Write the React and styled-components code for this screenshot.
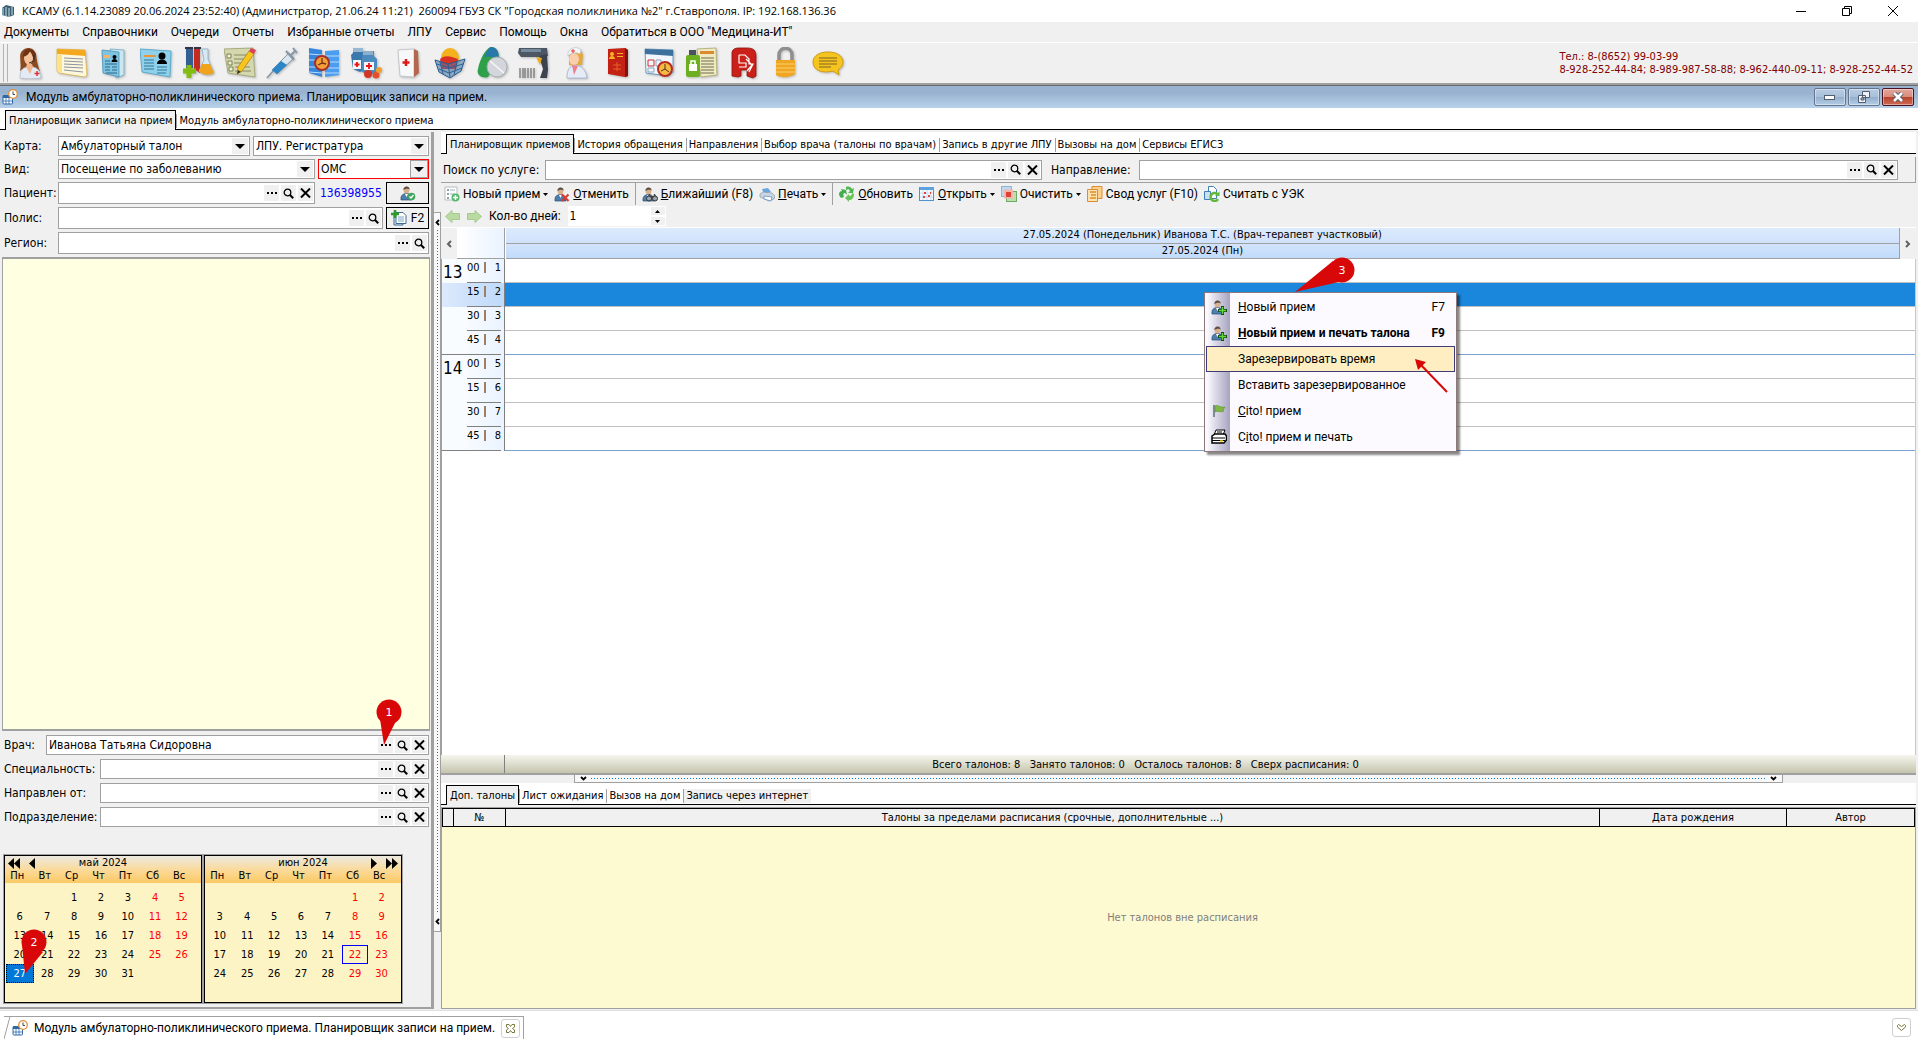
import React, { useState } from "react";
import styled, { createGlobalStyle, css } from "styled-components";

const tahoma = `"DejaVu Sans Condensed", "Noto Sans", sans-serif`;
const segoe = `Roboto, "Open Sans", sans-serif`;

const GlobalStyle = createGlobalStyle`
  * {
    box-sizing: border-box;
  }
  body {
    margin: 0;
    background: #ffffff;
    color: #000000;
    font: 12px/16px ${segoe};
  }
  button, input, select {
    margin: 0;
    padding: 0;
    border: 0;
    border-radius: 0;
    background: none;
    color: inherit;
    font: inherit;
  }
  table {
    border-collapse: separate;
    border-spacing: 0;
  }
  th, td {
    padding: 0;
    font-weight: normal;
  }
  svg {
    display: block;
    flex: none;
  }
`;

// Window frame
const Window = styled.div`
  display: flex;
  flex-direction: column;
  height: 100vh;
  overflow: hidden;
`;
const TitleBar = styled.header`
  display: flex;
  align-items: center;
  height: 22px;
  padding: 0 2px 0 1px;
  white-space: pre;
`;
const TitleText = styled.h1`
  flex: 1;
  margin: 0 0 0 7px;
  font: 11px/16px "Open Sans", sans-serif;
`;
const WindowButton = styled.button`
  display: flex;
  justify-content: center;
  width: 46px;
`;
const MenuBar = styled.nav`
  display: flex;
  gap: 13px;
  height: 20px;
  padding: 1px 4px;
  background: #f0f0f0;
`;
const MenuItem = styled.button`
  white-space: nowrap;
`;
const MainToolbar = styled.div`
  display: flex;
  align-items: center;
  gap: 2px;
  height: 43px;
  padding: 0 5px 0 3px;
  border-top: 1px solid #ffffff;
  border-bottom: 2px solid #a0a0a0;
  background: #f0f0f0;
`;
const Grip = styled.div`
  width: 5px;
  height: 38px;
  border: solid #b4b4b4;
  border-width: 0 1px;
`;
const MainIcons = styled.div`
  display: flex;
  gap: 6px;
  flex: 1;
  padding-left: 2px;
`;
const MainIconButton = styled.button`
  width: 36px;
  display: flex;
  justify-content: center;
  filter: drop-shadow(1px 1px 1px #8888);
`;
const Phones = styled.address`
  color: #800000;
  font: 11px/13px ${tahoma};
  white-space: nowrap;
`;

// Child window
const ChildTitle = styled.div`
  display: flex;
  align-items: center;
  height: 23px;
  padding: 0 4px 0 2px;
  gap: 8px;
  border-top: 1px solid #696969;
  background: linear-gradient(#99b4d1, #98b2cf 30%, #b9d1ea);
`;
const ChildTitleText = styled.h2`
  flex: 1;
  margin: 0;
  font: inherit;
`;
const CaptionGroup = styled.div`
  display: flex;
  gap: 2px;
`;
const CaptionButton = styled.button`
  display: flex;
  align-items: center;
  justify-content: center;
  width: 32px;
  height: 18px;
  border: 1px solid ${(props) => (props.$close ? "#4a1424" : "#65758f")};
  border-radius: 2px;
  box-shadow: inset 0 0 0 1px #ffffff66;
  background: ${(props) =>
    props.$close
      ? "linear-gradient(#e3a69b, #d88c7e 48%, #b8402a 50%, #cf6b54)"
      : "linear-gradient(#b8cde4, #a8c0da 48%, #93aecb 50%, #b4cde6)"};
`;

const Tabs = styled.div`
  display: flex;
  align-items: flex-end;
  flex: none;
  height: 22px;
  padding-left: 5px;
  border-bottom: 1px solid #000000;
  background: #ffffff;
  font: 11px/14px ${tahoma};
`;
const Tab = styled.button`
  position: relative;
  height: 14px;
  margin-bottom: 1px;
  padding: 0 3px 0 2px;
  white-space: nowrap;
  background: ${(props) => (props.$shaded ? "#f0f0f0" : "none")};
  & + & {
    border-left: 1px solid #a0a0a0;
  }
  ${(props) =>
    props.$active &&
    css`
      height: 20px;
      margin-bottom: -1px;
      padding: 0 3px;
      border: 1px solid #000000;
      border-bottom: 0;
      background: #f0f0f0;
      & + ${Tab} {
        border-left: 0;
      }
    `}
`;

const Workspace = styled.main`
  display: flex;
  flex: 1;
  min-height: 0;
  padding: 2px 2px 1px 0;
  background: #f0f0f0;
`;

// Left column
const Sidebar = styled.section`
  display: flex;
  flex-direction: column;
  flex: none;
  width: 434px;
  padding-left: 2px;
  border-right: 3px solid #a0a0a0;
  border-bottom: 2px solid #a0a0a0;
`;
const Form = styled.div`
  display: flex;
  flex-direction: column;
  gap: ${(props) => props.$gap}px;
  padding: 4px 2px 3px 1px;
  font: 12px/16px ${tahoma};
`;
const FormRow = styled.div`
  display: flex;
  align-items: center;
  gap: 3px;
`;
const FormLabel = styled.label`
  flex: none;
  width: ${(props) => props.$width}px;
  padding-left: 1px;
  margin-right: -3px;
  white-space: nowrap;
`;
const FieldBox = styled.div`
  display: flex;
  align-items: center;
  gap: 2px;
  flex: ${(props) => (props.$width ? "none" : "1")};
  width: ${(props) => (props.$width ? `${props.$width}px` : "auto")};
  height: ${(props) => props.$height || 20}px;
  padding: 0 1px 0 2px;
  border: 1px solid ${(props) => (props.$alert ? "#ff0000" : "#a0a0a0")};
  background: #ffffff;
`;
const TextInput = styled.input`
  flex: 1;
  min-width: 0;
  outline: 0;
`;
const FieldButton = styled.button`
  display: flex;
  align-items: center;
  justify-content: center;
  position: relative;
  width: 15px;
  height: 16px;
  background: #f0f0f0;
`;
const SelectBox = styled(FieldBox)`
  display: grid;
  grid-template-columns: 1fr 16px;
  gap: 0;
`;
const Select = styled.select`
  grid-area: 1 / 1 / 2 / 3;
  appearance: none;
  outline: 0;
`;
const SelectArrow = styled.span`
  grid-area: 1 / 2;
  display: flex;
  align-items: center;
  justify-content: center;
  height: 16px;
  background: #f0f0f0;
  pointer-events: none;
  outline: ${(props) => (props.$framed ? "1px solid #a0a0a0" : "0")};
`;
const PatientNumber = styled.output`
  width: 66px;
  padding-left: 2px;
  color: #0000ff;
`;
const FrameButton = styled.button`
  display: flex;
  align-items: center;
  justify-content: center;
  gap: 4px;
  width: 43px;
  height: 22px;
  border: 1px solid #000000;
  font-family: ${segoe};
`;
const PatientInfo = styled.div`
  flex: 1;
  min-height: 0;
  margin-right: 1px;
  border: 1px solid #a0a0a0;
  border-top-width: 2px;
  border-bottom-width: 2px;
  background: #ffffe1;
`;

// Calendar
const Calendars = styled.div`
  display: flex;
  gap: 2px;
  width: 400px;
  margin: 24px 0 3px 1px;
  padding: 1px;
  background: #a0a0a0;
`;
const Month = styled.table`
  flex: 1;
  height: 148px;
  padding-right: 7px;
  border: 1px solid #000000;
  background: linear-gradient(#ece9e0, #fbd995 55%, #fbc965) 0 0 / 100% 27px no-repeat
    #fdf4c6;
  font: 11px/12px ${tahoma};
  text-align: center;
  table-layout: fixed;
`;
const MonthBody = styled.tbody`
  &::before {
    content: "";
    display: table-row;
    height: 4px;
  }
`;
const MonthCaption = styled.th`
  height: 14px;
`;
const CaptionLine = styled.div`
  display: grid;
  grid-template-columns: 36px 1fr 36px;
  align-items: center;
  margin-right: -7px;
`;
const MonthNav = styled.span`
  display: flex;
  justify-content: ${(props) => (props.$end ? "flex-end" : "flex-start")};
  gap: 8px;
  padding: 0 3px;
`;
const Weekday = styled.th`
  height: 14px;
  padding: 0 4px 2px 0;
  line-height: 10px;
`;
const Day = styled.td`
  height: 19px;
  padding: 0 0 0 1px;
  color: ${(props) => (props.$weekend ? "#ff0000" : "#000000")};
`;
const DayMark = styled.span`
  display: block;
  position: relative;
  height: 19px;
  line-height: 19px;
  ${(props) =>
    props.$selected &&
    css`
      outline: 1px dotted #000000;
      outline-offset: -1px;
      background: #0078d7;
      color: #ffffff;
    `}
  ${(props) =>
    props.$today &&
    css`
      border: 1px solid #0000ff;
      line-height: 17px;
    `}
`;

// Splitters
const VerticalSplitter = styled.div`
  display: flex;
  flex-direction: column;
  align-items: center;
  justify-content: space-between;
  flex: none;
  width: 7px;
  margin: 80px 0 77px;
  padding: 6px 0;
  border: 1px solid #a0a0a0;
  border-left: 0;
  background: #f8f8f8;
`;
const SplitterDots = styled.span`
  flex: 1;
  margin: ${(props) => (props.$vertical ? "4px 0" : "0 4px")};
  ${(props) =>
    props.$vertical
      ? "width: 1px; background: repeating-linear-gradient(#0078d7 0 1px, #f8f8f8 1px 3px);"
      : "height: 1px; background: repeating-linear-gradient(90deg, #0078d7 0 1px, #f8f8f8 1px 3px);"}
`;
const HorizontalSplitter = styled.div`
  display: flex;
  align-items: center;
  width: 82%;
  height: 8px;
  margin: 0 auto;
  padding: 0 5px;
  border: 1px solid #a0a0a0;
  border-top: 0;
  background: #f8f8f8;
`;

// Right column
const Content = styled.section`
  display: flex;
  flex-direction: column;
  flex: 1;
  min-width: 0;
`;
const SearchRow = styled.div`
  display: flex;
  align-items: center;
  height: 26px;
  margin-top: 3px;
  padding: 0 17px 0 2px;
  border: 1px solid #a0a0a0;
  border-width: 0 1px 1px 0;
  font: 12px/16px ${tahoma};
`;
const SearchLabel = styled.label`
  flex: none;
  width: ${(props) => props.$width}px;
  padding-left: ${(props) => props.$indent || 0}px;
`;
const ActionBar = styled.div`
  display: flex;
  align-items: center;
  height: 22px;
  padding-left: 3px;
`;
const ActionButton = styled.button`
  display: flex;
  align-items: center;
  gap: 3px;
  margin-right: 6px;
  white-space: nowrap;
`;
const Divider = styled.span`
  width: 1px;
  height: 22px;
  margin-right: 6px;
  background: #a0a0a0;
`;
const DaysRow = styled.div`
  display: flex;
  align-items: center;
  gap: 7px;
  height: 22px;
  padding-left: 4px;
`;
const Spinner = styled.span`
  display: flex;
  height: 20px;
  width: 98px;
  padding-left: 2px;
  background: #ffffff;
  font: 12px/20px ${tahoma};
`;
const SpinnerButtons = styled.span`
  display: flex;
  flex-direction: column;
  gap: 2px;
  padding: 1px;
`;
const SpinnerButton = styled.button`
  display: flex;
  align-items: center;
  justify-content: center;
  width: 14px;
  height: 8px;
  background: #f0f0f0;
`;
const ScheduleHead = styled.div`
  display: flex;
  height: 32px;
  border-top: 1px solid #ffffff;
`;
const ScrollButton = styled.button`
  display: flex;
  align-items: center;
  justify-content: center;
  width: 16px;
`;
const Corner = styled.div`
  width: 48px;
  border-right: 1px solid #a0a0a0;
  border-bottom: 1px solid #a0a0a0;
  background: linear-gradient(90deg, #ffffff, #eaf3ff);
`;
const HeadColumn = styled.div`
  flex: 1;
  display: grid;
  grid-template-rows: 1fr 1fr;
  border-right: 1px solid #a0a0a0;
  font: 11px/14px ${tahoma};
  text-align: center;
`;
const HeadCell = styled.div`
  border: solid #ffffff;
  border-width: 0 0 0 1px;
  box-shadow: inset 0 -1px #a0a0a0;
  background: ${(props) =>
    props.$day
      ? "linear-gradient(#d2e4fb, #bfdafb)"
      : "linear-gradient(#dceafc, #cfe2fc)"};
`;
const ScheduleArea = styled.div`
  position: relative;
  flex: 1;
  min-height: 0;
  border-left: 1px solid #a0a0a0;
  border-right: 1px solid #c8c8c8;
  background: #ffffff;
`;
const Schedule = styled.table`
  width: 100%;
  font: 11px/14px ${tahoma};
  table-layout: fixed;
`;
const Hour = styled.th`
  width: 25px;
  padding: 1px 0 0 1px;
  border-bottom: 1px solid #808080;
  background: ${(props) =>
      props.$current && "linear-gradient(90deg, #dceafc, #cfe2fb) 0 24px / 100% 24px no-repeat"}
    #f9fcff;
  vertical-align: top;
  text-align: left;
  font-size: 17px;
  line-height: 24px;
`;
const TimeCell = styled.th`
  width: 38px;
  height: 24px;
  padding: 0 3px 0 0;
  border-right: 1px solid #808080;
  background: ${(props) =>
    props.$selected
      ? "linear-gradient(90deg, #cfe2fb, #bfdafb)"
      : "linear-gradient(90deg, #f7fbff, #eaf3ff)"};
  vertical-align: top;
`;
const TimeLine = styled.span`
  display: flex;
  align-items: center;
  justify-content: space-between;
  height: 24px;
  padding-bottom: 6px;
  border-bottom: 1px solid #808080;
`;
const TimeTick = styled.span`
  width: 2px;
  height: 11px;
  margin-right: 4px;
  border-left: 1px solid #a08060;
  background: #4a90d9;
`;
const Slot = styled.td`
  border-bottom: 1px solid ${(props) => (props.$hourEnd ? "#7ba2ce" : "#c0c0c0")};
  background: ${(props) => (props.$selected ? "#1a86dc" : "#ffffff")};
`;
const Totals = styled.div`
  display: flex;
  flex: none;
  height: 20px;
  border-bottom: 2px solid #a0a0a0;
  background: linear-gradient(#f5f5ee, #c5c5ae);
  font: 11px/19px ${tahoma};
  white-space: pre;
`;
const TotalsCorner = styled.span`
  width: 64px;
  border-right: 1px solid #808080;
`;
const TotalsText = styled.span`
  flex: 1;
  padding-right: 130px;
  text-align: center;
`;
const ExtraPanel = styled.div`
  display: flex;
  flex-direction: column;
  height: 202px;
  margin-top: 2px;
  border: 1px solid #a0a0a0;
  background: #fdfad2;
`;
const ExtraTable = styled.table`
  width: 100%;
  background: #f0f0f0;
  border: 1px solid #000000;
  border-right: 0;
  table-layout: fixed;
  font: 11px/17px ${tahoma};
`;
const ExtraHead = styled.th`
  width: ${(props) => (props.$width ? `${props.$width}px` : "auto")};
  height: 17px;
  border-right: 1px solid #000000;
`;
const EmptyNote = styled.p`
  display: flex;
  align-items: center;
  justify-content: center;
  flex: 1;
  margin: 0;
  padding-left: 8px;
  color: #808080;
  font: 11px/14px ${tahoma};
`;

// Context menu
const ContextMenu = styled.ul`
  position: absolute;
  top: 33px;
  left: 762px;
  width: 253px;
  margin: 0;
  padding: 1px;
  list-style: none;
  border: 1px solid #8c7878;
  background: linear-gradient(90deg, #fcfaff 1px, #fcfaff 2px, #a6a3c0 25px, #fcfaff 25px);
  box-shadow: 3px 3px 2px #0007;
`;
const ContextItem = styled.button`
  display: grid;
  grid-template-columns: 24px 1fr auto;
  align-items: center;
  gap: 7px;
  width: 100%;
  height: 26px;
  padding-right: 9px;
  border: 1px solid ${(props) => (props.$hover ? "#3c3c78" : "transparent")};
  background: ${(props) => (props.$hover ? "#ffeec2" : "none")};
  font-weight: ${(props) => (props.$bold ? "bold" : "normal")};
  text-align: left;
  white-space: nowrap;
`;
const ContextIcon = styled.span`
  display: flex;
  justify-content: center;
`;

// Step markers drawn over the window
const Marker = styled.svg`
  position: absolute;
  z-index: 2;
  top: ${(props) => props.$top}px;
  left: ${(props) => props.$left}px;
  pointer-events: none;
  overflow: visible;
`;

// Task strip
const TaskStrip = styled.footer`
  display: flex;
  align-items: flex-end;
  justify-content: space-between;
  flex: none;
  height: 29px;
  padding: 0 7px 0 4px;
  border-top: 1px solid #e0e0e0;
  background: #ffffff;
`;
const TaskTab = styled.div`
  display: flex;
  align-items: center;
  gap: 6px;
  height: 23px;
  border: 1px solid #a0a0a0;
  border-width: 1px 1px 0 0;
  padding-right: 3px;
`;
const TaskSlant = styled.svg`
  margin: -1px -8px 0 0;
`;
const TaskButton = styled.button`
  display: flex;
  align-items: center;
  justify-content: center;
  width: 19px;
  height: 19px;
  margin: ${(props) => (props.$raised ? "0 0 2px" : "0")};
  border: 1px solid #cfcfcf;
  border-radius: 3px;
`;

const Svg16 = ({ children }) => (
  <svg width="16" height="16" viewBox="0 0 16 16">
    {children}
  </svg>
);

const PlannerIcon = () => (
  <Svg16>
    <rect x="1" y="6.5" width="9.5" height="8.5" rx="1" fill="#fff" stroke="#2f68a8" />
    <path d="M1 6h10v3H1z" fill="#2f68a8" />
    <path d="M4 9v6M7 9v6M1 12h10" stroke="#2f68a8" strokeWidth=".8" />
    <circle cx="11" cy="5" r="4.3" fill="#fff" stroke="#e0913a" strokeWidth="1.3" />
    <path d="M11 2.5V5.5h2" fill="none" stroke="#444" />
  </Svg16>
);
const AppIcon = () => (
  <svg width="14" height="14" viewBox="0 0 14 14">
    <path d="M1 4l4-3 8 2v8l-5 2-7-2z" fill="#3e5d6c" />
    <path d="M2 4v7M5 3v9M8 4v9M11 3v8" stroke="#a9cfdc" strokeWidth="1.2" />
  </svg>
);
const DotsIcon = () => (
  <svg width="10" height="2" viewBox="0 0 10 2">
    <path d="M0 0h2v2H0zM4 0h2v2H4zM8 0h2v2H8z" />
  </svg>
);
const SearchIcon = () => (
  <svg width="11" height="11" viewBox="0 0 11 11">
    <circle cx="4.5" cy="4.5" r="3.3" fill="none" stroke="#000" strokeWidth="1.3" />
    <path d="M6.8 6.8l3.4 3.4" stroke="#000" strokeWidth="2" />
  </svg>
);
const CrossIcon = () => (
  <svg width="11" height="10" viewBox="0 0 11 10">
    <path d="M1 .5l9 9M10 .5l-9 9" stroke="#000" strokeWidth="2" />
  </svg>
);
const DownIcon = () => (
  <svg width="10" height="5" viewBox="0 0 10 5">
    <path d="M0 0h10L5 5z" />
  </svg>
);
const SmallDown = () => (
  <svg width="5" height="3" viewBox="0 0 5 3">
    <path d="M0 0h5L2.500 3z" />
  </svg>
);
const UpIcon = () => (
  <svg width="5" height="3" viewBox="0 0 5 3">
    <path d="M0 3h5L2.500 0z" />
  </svg>
);
const Chevron = ({ d }) => (
  <svg width="8" height="8" viewBox="0 0 8 8">
    <path d={d} fill="none" stroke="#606060" strokeWidth="2" />
  </svg>
);
const SplitArrow = ({ d }) => (
  <svg width="7" height="7" viewBox="0 0 7 7">
    <path d={d} fill="none" stroke="#000" strokeWidth="1.8" />
  </svg>
);

const Person = ({ children }) => (
  <Svg16>
    <path d="M1 15c-.5-5 2-6 5-6.500 4 0 6 2 6 6.500z" fill="#4d7fae" stroke="#274b70" strokeWidth=".7" />
    <path d="M5 9l1.500 3L8 9z" fill="#fff" />
    <ellipse cx="6.500" cy="5" rx="2.900" ry="3.600" fill="#d8b08c" />
    <path d="M3.400 5C3 .5 10 .2 9.700 5 8.500 3 6 4 3.400 5z" fill="#5b5048" />
    {children}
  </Svg16>
);
const PersonPlus = () => (
  <Person>
    <path d="M11.500 7v9M7 11.500h9" stroke="#124d12" strokeWidth="3" />
    <path d="M11.500 8v7M8 11.500h7" stroke="#62d83a" strokeWidth="1.500" />
  </Person>
);
const PersonCheck = () => (
  <Person>
    <circle cx="11.500" cy="11.500" r="3.800" fill="#3fa45c" />
    <path d="M9.500 11.500l1.500 1.500 2.500-3" fill="none" stroke="#fff" strokeWidth="1.300" />
  </Person>
);
const PersonCross = () => (
  <Person>
    <path d="M8 8.500l6.500 6.500M14.500 8.500L8 15" stroke="#d63a32" strokeWidth="2" />
  </Person>
);
const PersonFind = () => (
  <Person>
    <circle cx="7" cy="12.500" r="2.500" fill="#9aa5b0" stroke="#333" />
    <circle cx="13" cy="12.500" r="2.500" fill="#9aa5b0" stroke="#333" />
    <path d="M6 10l1-2h1l1 4h2l1-4h1l1 2" fill="#444" />
  </Person>
);
const SheetPlus = () => (
  <Svg16>
    <path d="M3 4h9v11H3z" fill="#dcebf5" stroke="#3f6c92" />
    <path d="M5 2.500h7l3 3v8H5z" fill="#fff" stroke="#3f6c92" />
    <path d="M7 7h6M7 9h6M7 11h6" stroke="#7ba6c6" />
    <path d="M4 0v8M0 4h8" stroke="#2e9a28" strokeWidth="2.600" />
  </Svg16>
);
const NewVisitIcon = () => (
  <Svg16>
    <path d="M1 1h12v13H1z" fill="#fff" stroke="#b7bcc2" />
    <path d="M3 3h2v2H3zM3 7h2v2H3zM3 11h2v2H3z" fill="#8fa0b0" />
    <path d="M6 4h5M6 8h5" stroke="#9bb0c4" />
    <circle cx="11.500" cy="11.500" r="4" fill="#54b86c" />
    <path d="M11.500 9v5M9 11.500h5" stroke="#fff" strokeWidth="1.500" />
  </Svg16>
);
const PrinterIcon = () => (
  <Svg16>
    <path d="M3 3l6-1 3 4-7 2z" fill="#6aa6e0" />
    <path d="M1 8l3-2 9 1 3 3-1 3-5 2-9-4z" fill="#ccd6e0" stroke="#8796a6" strokeWidth=".7" />
    <path d="M5 10l8 1-1 4-7-2z" fill="#fff" stroke="#4b86c4" strokeWidth=".7" />
  </Svg16>
);
const RefreshIcon = () => (
  <Svg16>
    <path d="M0 9c0-3 1-4 3-4l-1-2 5 1 1 5-2-2C4 7 4 9 5 11l-3 1z" fill="#41ae4b" />
    <path d="M7 1c3-1 5 0 6 2l2-1-1 5-5 0 2-2C10 3 9 3 7 4z" fill="#4fb852" />
    <path d="M15 8c0 4-2 6-5 6v2l-4-4 4-4v2c2 0 3-1 3-3z" fill="#68c659" />
  </Svg16>
);
const OpenIcon = () => (
  <Svg16>
    <rect x=".5" y="1.500" width="14" height="13" fill="#f6fbff" stroke="#4d92d2" />
    <path d="M1 1h14v3H1z" fill="#5ea3e0" />
    <path d="M4 4v10M8 4v10M12 4v10M1 7h13M1 11h13" stroke="#c5def3" />
    <path d="M5 6h2v2H5zM9 9h2v2H9zM4 10h2v2H4zM11 6h1v2h-1z" fill="#e0453c" />
  </Svg16>
);
const ClearIcon = () => (
  <Svg16>
    <rect x=".5" y=".5" width="10" height="10" fill="#bcd9ef" stroke="#8fb5d3" />
    <rect x="5.500" y="5.500" width="10" height="10" fill="#b9e0ae" stroke="#6faa64" />
    <rect x="3" y="3.500" width="9" height="9" fill="#f3b6ac" />
    <rect x="5" y="6" width="5" height="5" fill="#dd4136" />
  </Svg16>
);
const SummaryIcon = () => (
  <Svg16>
    <path d="M5 .5h10v12H5z" fill="#fbd08a" stroke="#d98e35" />
    <path d="M.5 3.500h10v12H.5z" fill="#fde2ae" stroke="#d98e35" />
    <path d="M3 6h6M4 9h5M3 12h6" stroke="#e08a2c" strokeWidth="1.500" />
  </Svg16>
);
const CardIcon = () => (
  <Svg16>
    <path d="M4.500.5h5l3 3v9h-8z" fill="#fff" stroke="#3f7fb5" />
    <path d="M.5 5.500h6v8h-6z" fill="#c8e0f2" stroke="#3f7fb5" />
    <path d="M14 9a4 4 0 1 0 0 4" fill="none" stroke="#62b83c" strokeWidth="2.500" />
    <path d="M11 10h4.500V5.500z" fill="#62b83c" />
  </Svg16>
);
const FlagIcon = () => (
  <Svg16>
    <path d="M3 2v12" stroke="#7f8b98" strokeWidth="2" />
    <path d="M4 3c3-2 4 2 10 1l-2 3 1 1c-4 2-6-1-9 1z" fill="#7fb845" stroke="#5a8f2c" strokeWidth=".6" />
  </Svg16>
);
const BlackPrinter = () => (
  <Svg16>
    <path d="M5 1h9l-2 5H3z" fill="#fff" stroke="#000" />
    <path d="M1 7l3-2h10l1.500 2v4L13 14H1z" fill="#fff" stroke="#000" strokeWidth="1.500" />
    <path d="M1 9h13M1 11.500h13M6 3h5" stroke="#000" />
    <path d="M9 12h3" stroke="#e8d422" strokeWidth="1.500" />
  </Svg16>
);
const GreenArrow = ({ left }) => (
  <svg width="15" height="13" viewBox="0 0 15 13">
    <path
      d={left ? "M.5 6.500L7 .5v3h7.500v6H7v3z" : "M14.500 6.500L8 .5v3H.5v6H8v3z"}
      fill="#b9dba2"
      stroke="#a3cc8c"
    />
  </svg>
);

// 32px pictures of the main toolbar
const mainIcons = [
  ["Регистратура", <>
    <path d="M6 24C8 16 4 8 8 4c4-5 12-4 14 3 1 5 1 10 4 17l-8-3H10z" fill="#8a4a20" />
    <path d="M6 31c0-7 2-10 7-11h6c5 1 8 5 8 11-6 1-16 1-21 0z" fill="#e4eaf4" stroke="#aebccd" strokeWidth=".7" />
    <path d="M12 20l4 7 3-7-1-3h-5z" fill="#f0b48e" />
    <ellipse cx="14.500" cy="11" rx="4.500" ry="6.500" fill="#f4c39e" />
    <path d="M9 10c4-1 6-3 7-6 2 3 3 6 4 10l2-6c-1-4-4-6-7-6-4 0-6 3-6 8z" fill="#6e3213" />
    <path d="M20 8v6l-5 2" fill="none" stroke="#333" />
    <path d="M23 24v5M20.500 26.500h5" stroke="#d33" strokeWidth="1.500" />
  </>],
  ["Журнал", <>
    <path d="M1 2l28 1 2 25-2 2-26-4-2-2z" fill="#fdf8dd" stroke="#d9b048" strokeWidth=".8" />
    <path d="M1 2l28 1 1 6L1 7z" fill="#f3a81e" />
    <path d="M1 8h5v18l-5-2z" fill="#fbe38a" />
    <path d="M8 11l19 1M8 14l19 1M8 17l19 1M8 20l19 1M8 23l19 2" stroke="#8a93a0" />
  </>],
  ["Картотека", <>
    <path d="M12 2l14 1v25l-8 3z" fill="#c9e6f1" stroke="#6fadc7" strokeWidth=".8" />
    <path d="M4 3l17 2v25L5 26z" fill="#7cc4e2" stroke="#4c92b3" strokeWidth=".8" />
    <path d="M6 8h6v3H6z" fill="#f2b46b" />
    <circle cx="16.500" cy="10" r="2" /><path d="M13.500 15c0-4 6-4 6 0z" />
    <path d="M7 14h5M7 17h12M7 20h5M14 20h5M7 23h5M14 23h5M8 26h11" stroke="#2f6785" />
  </>],
  ["Карта пациента", <>
    <path d="M0 2l31 2-1 26L2 25z" fill="#8fd0ea" stroke="#4b9fc4" strokeWidth=".8" />
    <path d="M4 8h12v2H4z" fill="#e8963c" />
    <circle cx="22" cy="9" r="3.500" /><path d="M17 17c0-6 10-6 10 0z" />
    <path d="M4 13h10M4 16h10M4 19h10M17 20h10M4 22h10M17 23h10M17 26h9" stroke="#2f7898" />
  </>],
  ["Анализы", <>
    <path d="M4 2h7v19H4z" fill="#355f90" /><path d="M12 2h6v24l-6-4z" fill="#c32b20" />
    <path d="M3 1h8M12 1h7" stroke="#334" strokeWidth="2" />
    <path d="M20 2h6v10l6 14c-4 3-13 2-15-2l5-11z" fill="#d8e9f6" stroke="#8baac3" strokeWidth=".8" />
    <path d="M20 17h8l4 9c-4 3-13 2-15-2z" fill="#f2a31d" />
    <path d="M7 18v13M1 24h13" stroke="#83bd12" strokeWidth="5" />
  </>],
  ["Запись", <>
    <path d="M0 2l29-1 2 29L4 26z" fill="#d5d8ae" stroke="#99a06f" strokeWidth=".8" />
    <path d="M3 7h4v4H3zM4 14h4v4H4zM5 20h4v4H5z" fill="#eef0d3" stroke="#7b8255" />
    <path d="M10 8h15M10 12h14M10 16h14M11 20h15M11 24h16" stroke="#838a5e" />
    <path d="M13 27l1-7L25 4l5 3-12 17z" fill="#f8c51f" stroke="#a97a10" strokeWidth=".7" />
    <path d="M25 4l2-3 5 2-2 4z" fill="#d8425a" /><path d="M13 27l1-4 3 2z" fill="#333" />
  </>],
  ["Прививки", <>
    <path d="M1 31l7-8" stroke="#8294a6" strokeWidth="1.500" />
    <path d="M6 23L23 6l5 5L11 27z" fill="#dce6ef" stroke="#8396a8" />
    <path d="M6 23l9-9 6 4-10 9z" fill="#2b86c8" />
    <path d="M20 4l8 9M24 9l5-5M27 1l4 5" stroke="#8798a8" strokeWidth="2" />
  </>],
  ["Расписание", <>
    <path d="M1 1l13 2v27l-13-4z" fill="#3686de" /><path d="M17 4l14-1v25l-14 2z" fill="#4b9df0" />
    <path d="M1 7l13 1M1 13h13M1 20h13M1 25l13 1M17 9h14M17 15h14M17 21h14M17 26h14" stroke="#b9dbfb" />
    <circle cx="14" cy="16" r="7" fill="#f5a037" stroke="#a5322a" strokeWidth="2" />
    <path d="M14 11v5l-4 2M14 16l4 1" stroke="#70311a" strokeWidth="1.300" fill="none" />
  </>],
  ["Лекарства", <>
    <path d="M3 1h10v6l3 2v13l-6 3-7-3-2-14 2-2z" fill="#3a77ad" /><path d="M3 1h10v4H3z" fill="#97b8d2" />
    <path d="M13 4h11v5l3 3v13l-7 3-8-3V11z" fill="#4b8bc0" /><path d="M13 4h10v4H13z" fill="#8cb0cc" />
    <path d="M3 13h8v9H3zM14 15h10v8H14z" fill="#f4f7fa" />
    <path d="M7 15v5M4.500 17.500h5M19 16v6M16 19h6" stroke="#e11" strokeWidth="1.800" />
    <circle cx="18" cy="27" r="4" fill="#d53524" /><circle cx="26" cy="28" r="3.500" fill="#e2502e" /><circle cx="29" cy="23" r="3" fill="#f0a030" />
  </>],
  ["Справочник врача", <>
    <path d="M6 3l16-1v28L8 29z" fill="#f7f8f9" stroke="#c3c7cc" />
    <path d="M22 2l4 2 1 22-5 4z" fill="#b4664f" />
    <path d="M14 12v7M10.500 15.500h7" stroke="#e01818" strokeWidth="2.500" />
  </>],
  ["Аптека", <>
    <ellipse cx="16" cy="11" rx="9" ry="10" fill="#f3b21c" /><path d="M6 12c6-5 12-2 18 0l-2 10H8z" fill="#d93124" />
    <path d="M1 13l13 4 17-5-4 12-11 7L5 25z" fill="#3f7fb877" stroke="#275a8b" />
    <path d="M3 17l12 4 14-4M5 22l10 4 13-5M6 15l3 12M23 15l-3 13M14 17l2 13" stroke="#2c5f95" fill="none" />
  </>],
  ["Таблетки", <>
    <path d="M2 22C4 12 9 2 15 0c8 0 9 10 7 14L12 30C6 32 0 28 2 22z" fill="#2fa04a" />
    <path d="M15 0c7 0 9 8 7 14-4-4-9-6-14-3C10 6 12 1 15 0z" fill="#2878a8" />
    <circle cx="21" cy="20" r="10" fill="#d3d6da" stroke="#a7acb2" /><path d="M14 14l14 12" stroke="#f8f8f8" strokeWidth="1.500" />
  </>],
  ["Сканер", <>
    <path d="M1 1h28l1 8-9 1H3L0 6z" fill="#4c5763" /><path d="M3 2h20v3H3z" fill="#74899c" />
    <path d="M21 9l8-2 1 16-1 8h-7l3-9z" fill="#3b444e" /><path d="M18 10l4 8 2-7z" fill="#e8ac1c" />
    <path d="M2 21v10M5 21v10M7 21v10M10 21v10M13 21v10M16 21v10" stroke="#777" strokeWidth="1.300" />
  </>],
  ["Медсестра", <>
    <path d="M9 4c3-5 12-4 14 4l-1 10H9z" fill="#e6a83a" />
    <ellipse cx="14" cy="12" rx="5" ry="6" fill="#f9cfae" /><path d="M8 6c2-6 9-7 13-3l-1 4c-4-2-8-2-12 2z" fill="#f3f6fa" stroke="#b9c4d0" strokeWidth=".6" />
    <path d="M13 2v4M11 4h4" stroke="#e33" />
    <path d="M7 31c0-9 3-12 8-13 7 1 11 5 12 13z" fill="#e5ecf8" stroke="#9fb3d0" strokeWidth=".8" />
    <path d="M12 18l2 10 4-9z" fill="#ee7f8d" />
  </>],
  ["Полисы", <>
    <path d="M6 2l17-1 3 2v26l-3 1L6 27z" fill="#c22114" /><path d="M23 1l3 2v26l-3 1z" fill="#7f120a" />
    <circle cx="10" cy="7" r="2" fill="#f6b223" /><path d="M7 12c0-4 6-4 6 0zM15 6h6v1h-6zM15 9h6v1h-6z" fill="#f6b223" />
    <path d="M15 15v9M11 18h8M11 22h8" stroke="#e4622b" />
  </>],
  ["План", <>
    <path d="M1 2l28 1v22l-4 4L2 26z" fill="#f2f6fb" stroke="#6b9ac2" /><path d="M1 2l28 1v6L1 7z" fill="#3c719e" />
    <path d="M12 13h5v6h-5zM4 21h6v4H4z" fill="none" stroke="#8aa6bd" /><path d="M4 13h6v6H4z" fill="none" stroke="#c33" />
    <circle cx="21" cy="22" r="7" fill="#f6ba42" stroke="#b62b22" strokeWidth="2" /><path d="M21 17v5l4 3M21 22l-4 2" stroke="#4c3420" fill="none" />
  </>],
  ["Защищенные данные", <>
    <path d="M11 2l19-1 1 27-16 2z" fill="#f0eac0" stroke="#aaa56e" strokeWidth=".8" /><path d="M14 4h14v3H14z" fill="#db8a30" />
    <path d="M15 11h13M15 14h13M15 17h13M15 20h13M15 23h13M15 26h13" stroke="#6c6c4c" />
    <path d="M3 3h7v5H3z" fill="#4b525b" /><rect x="0" y="8" width="14" height="22" rx="2" fill="#6cb021" />
    <path d="M3 17h8v7H3z" fill="#fff" /><path d="M5 17v-3h4v3" fill="none" stroke="#fff" strokeWidth="1.500" />
  </>],
  ["Переход", <>
    <path d="M4 5c1-3 3-4 7-4h8c7 0 9 3 9 8v20l-3 2-6-2v-6h-6v6l-3 1-6-1z" fill="#cb2019" stroke="#8e130e" strokeWidth=".8" />
    <path d="M11 8h6l4 4v5h4l-4 8M11 8v8h7v4h-7M18 12l6 6-5 6" fill="none" stroke="#fff" strokeWidth="1.200" />
  </>],
  ["Блокировка", <>
    <path d="M9 15V8c0-9 13-9 13 0v7" fill="none" stroke="#8f8f8f" strokeWidth="3.500" />
    <path d="M6 13h19v14c-5 4-15 4-19 1z" fill="#f0a623" /><path d="M6 17h19M6 21h19M6 25h19" stroke="#f8cf6b" />
  </>],
  ["Сообщения", <>
    <path d="M16 5c9 0 15 4 15 10 0 4-2 6-5 8l1 5-6-4C10 27 1 23 1 15 1 9 7 5 16 5z" fill="#f6c41e" stroke="#cf9a12" />
    <path d="M7 11h18M7 14h18M7 17h18M7 20h12" stroke="#7e6420" strokeWidth="1.200" />
  </>],
];

const menu = [
  "Документы",
  "Справочники",
  "Очереди",
  "Отчеты",
  "Избранные отчеты",
  "ЛПУ",
  "Сервис",
  "Помощь",
  "Окна",
  'Обратиться в ООО "Медицина-ИТ"',
];
const plannerTabs = [
  "Планировщик приемов",
  "История обращения",
  "Направления",
  "Выбор врача (талоны по врачам)",
  "Запись в другие ЛПУ",
  "Вызовы на дом",
  "Сервисы ЕГИСЗ",
];
const extraTabs = [
  "Доп. талоны",
  "Лист ожидания",
  "Вызов на дом",
  "Запись через интернет",
];
const weekdays = ["Пн", "Вт", "Ср", "Чт", "Пт", "Сб", "Вс"];
const hours = ["13", "14"];
const minutes = ["00", "15", "30", "45"];

const LookupField = ({ id, value = "", width, height, clear, marker }) => {
  const [text, setText] = useState(value);
  return (
    <FieldBox $width={width} $height={height}>
      <TextInput id={id} value={text} onChange={(e) => setText(e.target.value)} />
      <FieldButton aria-label="Выбрать">
        <DotsIcon />
        {marker}
      </FieldButton>
      <FieldButton aria-label="Найти">
        <SearchIcon />
      </FieldButton>
      {clear && (
        <FieldButton aria-label="Очистить поле" onClick={() => setText("")}>
          <CrossIcon />
        </FieldButton>
      )}
    </FieldBox>
  );
};

const SelectField = ({ id, label, value, width, alert }) => (
  <SelectBox $width={width} $alert={alert}>
    <Select id={id} aria-label={label}>
      <option>{value}</option>
    </Select>
    <SelectArrow $framed={alert}>
      <DownIcon />
    </SelectArrow>
  </SelectBox>
);

const StepMarker = ({ number, tip, top, left }) => (
  <Marker width="26" height="26" viewBox="0 0 26 26" $top={top} $left={left}>
    <path d={tip} fill="#d80808" />
    <circle cx="13" cy="13" r="12.500" fill="#d80808" />
    <text x="13" y="17" textAnchor="middle" fill="#fff" fontSize="11" fontFamily="DejaVu Sans">
      {number}
    </text>
  </Marker>
);

const CalendarMonth = ({ title, offset, days, selected, today, before, after }) => (
  <Month>
    <thead>
      <tr>
        <MonthCaption colSpan="7">
          <CaptionLine>
            <MonthNav>{before}</MonthNav>
            <span>{title}</span>
            <MonthNav $end>{after}</MonthNav>
          </CaptionLine>
        </MonthCaption>
      </tr>
      <tr>
        {weekdays.map((day) => (
          <Weekday key={day}>{day}</Weekday>
        ))}
      </tr>
    </thead>
    <MonthBody>
      {[0, 1, 2, 3, 4, 5].map((week) => (
        <tr key={week}>
          {weekdays.map((name, i) => {
            const day = week * 7 + i - offset + 1;
            const shown = day > 0 && day <= days;
            return (
              <Day key={name} $weekend={i > 4}>
                {shown && (
                  <DayMark $selected={day === selected} $today={day === today}>
                    {day}
                    {day === selected && (
                      <StepMarker number="2" tip="M1 16L4 45l18-22z" top={-35} left={15} />
                    )}
                  </DayMark>
                )}
              </Day>
            );
          })}
        </tr>
      ))}
    </MonthBody>
  </Month>
);

const NavGlyph = ({ d, wide }) => (
  <svg width={wide ? 12 : 7} height="11" viewBox={wide ? "0 0 12 11" : "0 0 7 11"}>
    <path d={d} />
  </svg>
);

const Action = ({ icon, hot, text, drop }) => (
  <ActionButton>
    {icon}
    <span>
      {hot && <u>{hot}</u>}
      {text}
    </span>
    {drop && <SmallDown />}
  </ActionButton>
);

const App = () => {
  const [tab, setTab] = useState(0);
  const [extraTab, setExtraTab] = useState(0);
  const [daysCount, setDaysCount] = useState(1);

  return (
    <Window>
      <GlobalStyle />
      <TitleBar>
        <AppIcon />
        <TitleText>
          {'КСАМУ (6.1.14.23089 20.06.2024 23:52:40) (Администратор, 21.06.24 11:21)  260094 ГБУЗ СК "Городская поликлиника №2" г.Ставрополя. IP: 192.168.136.36'}
        </TitleText>
        <WindowButton aria-label="Свернуть">
          <svg width="10" height="10" viewBox="0 0 10 10"><path d="M0 5.500h10" stroke="#000" /></svg>
        </WindowButton>
        <WindowButton aria-label="Восстановить">
          <svg width="10" height="10" viewBox="0 0 10 10">
            <path d="M.5 2.500h7v7h-7zM2.500 2V.5h7v7H8" fill="none" stroke="#000" />
          </svg>
        </WindowButton>
        <WindowButton aria-label="Закрыть">
          <svg width="10" height="10" viewBox="0 0 10 10"><path d="M0 0l10 10M10 0L0 10" stroke="#000" /></svg>
        </WindowButton>
      </TitleBar>
      <MenuBar>
        {menu.map((item) => (
          <MenuItem key={item}>{item}</MenuItem>
        ))}
      </MenuBar>
      <MainToolbar>
        <Grip />
        <MainIcons>
          {mainIcons.map(([label, art]) => (
            <MainIconButton key={label} aria-label={label}>
              <svg width="32" height="32" viewBox="0 0 32 32">{art}</svg>
            </MainIconButton>
          ))}
        </MainIcons>
        <Phones>
          Тел.: 8-(8652) 99-03-99
          <br />
          8-928-252-44-84; 8-989-987-58-88; 8-962-440-09-11; 8-928-252-44-52
        </Phones>
      </MainToolbar>

      <ChildTitle>
        <PlannerIcon />
        <ChildTitleText>
          Модуль амбулаторно-поликлинического приема. Планировщик записи на прием.
        </ChildTitleText>
        <CaptionGroup>
          <CaptionButton aria-label="Свернуть окно">
            <svg width="12" height="5" viewBox="0 0 12 5">
              <rect x=".5" y=".5" width="10" height="4" fill="#fff" stroke="#535d70" />
            </svg>
          </CaptionButton>
          <CaptionButton aria-label="Восстановить окно">
            <svg width="12" height="12" viewBox="0 0 12 12">
              <path d="M4.500.5h7v6h-7zM.5 4.500h7v7h-7z" fill="#eef3f9" stroke="#535d70" />
              <path d="M3 7h3v2H3z" fill="#a8c0da" stroke="#535d70" />
            </svg>
          </CaptionButton>
          <CaptionButton $close aria-label="Закрыть окно">
            <svg width="12" height="10" viewBox="0 0 12 10">
              <path d="M2 1l8 8M10 1L2 9" stroke="#535d70" strokeWidth="4.500" />
              <path d="M2 1l8 8M10 1L2 9" stroke="#fff" strokeWidth="2.500" />
            </svg>
          </CaptionButton>
        </CaptionGroup>
      </ChildTitle>
      <Tabs>
        <Tab $active>Планировщик записи на прием</Tab>
        <Tab>Модуль амбулаторно-поликлинического приема</Tab>
      </Tabs>

      <Workspace>
        <Sidebar>
          <Form $gap={3}>
            <FormRow>
              <FormLabel $width={55} htmlFor="card">Карта:</FormLabel>
              <SelectField id="card" value="Амбулаторный талон" width={192} />
              <SelectField label="Место" value="ЛПУ. Регистратура" />
            </FormRow>
            <FormRow>
              <FormLabel $width={55} htmlFor="kind">Вид:</FormLabel>
              <SelectField id="kind" value="Посещение по заболеванию" width={257} />
              <SelectField label="Оплата" value="ОМС" alert />
            </FormRow>
            <FormRow>
              <FormLabel $width={55} htmlFor="patient">Пациент:</FormLabel>
              <LookupField id="patient" width={257} height={22} clear />
              <PatientNumber>136398955</PatientNumber>
              <FrameButton aria-label="Проверить пациента">
                <PersonCheck />
              </FrameButton>
            </FormRow>
            <FormRow>
              <FormLabel $width={55} htmlFor="policy">Полис:</FormLabel>
              <LookupField id="policy" height={22} />
              <FrameButton>
                <SheetPlus />
                F2
              </FrameButton>
            </FormRow>
            <FormRow>
              <FormLabel $width={55} htmlFor="region">Регион:</FormLabel>
              <LookupField id="region" height={22} />
            </FormRow>
          </Form>
          <PatientInfo />
          <Form $gap={4}>
            <FormRow>
              <FormLabel $width={43} htmlFor="doctor">Врач:</FormLabel>
              <LookupField
                id="doctor"
                value="Иванова Татьяна Сидоровна"
                clear
                marker={<StepMarker number="1" tip="M4 20l4 26 12-24z" top={-38} left={-2} />}
              />
            </FormRow>
            <FormRow>
              <FormLabel $width={97} htmlFor="speciality">Специальность:</FormLabel>
              <LookupField id="speciality" clear />
            </FormRow>
            <FormRow>
              <FormLabel $width={97} htmlFor="referred">Направлен от:</FormLabel>
              <LookupField id="referred" clear />
            </FormRow>
            <FormRow>
              <FormLabel $width={97} htmlFor="department">Подразделение:</FormLabel>
              <LookupField id="department" clear />
            </FormRow>
          </Form>
          <Calendars>
            <CalendarMonth
              title="май 2024"
              offset={2}
              days={31}
              selected={27}
              before={
                <>
                  <NavGlyph wide d="M6 0v11L0 5.500zM12 0v11L6 5.500z" />
                  <NavGlyph d="M7 0v11L1 5.500z" />
                </>
              }
            />
            <CalendarMonth
              title="июн 2024"
              offset={5}
              days={30}
              today={22}
              after={
                <>
                  <NavGlyph d="M0 0v11l6-5.500z" />
                  <NavGlyph wide d="M0 0v11l6-5.500zM6 0v11l6-5.500z" />
                </>
              }
            />
          </Calendars>
        </Sidebar>

        <VerticalSplitter>
          <SplitArrow d="M5 1L2.500 3.500 5 6" />
          <SplitterDots $vertical />
          <SplitArrow d="M5 1L2.500 3.500 5 6" />
        </VerticalSplitter>

        <Content>
          <Tabs>
            {plannerTabs.map((name, i) => (
              <Tab key={name} $active={i === tab} onClick={() => setTab(i)}>
                {name}
              </Tab>
            ))}
          </Tabs>
          <SearchRow>
            <SearchLabel $width={102} htmlFor="service">Поиск по услуге:</SearchLabel>
            <LookupField id="service" width={497} clear />
            <SearchLabel $width={97} $indent={9} htmlFor="direction">Направление:</SearchLabel>
            <LookupField id="direction" clear />
          </SearchRow>
          <ActionBar>
            <Action icon={<NewVisitIcon />} text="Новый прием" drop />
            <Action icon={<PersonCross />} hot="О" text="тменить" />
            <Divider />
            <Action icon={<PersonFind />} hot="Б" text="лижайший (F8)" />
            <Action icon={<PrinterIcon />} hot="П" text="ечать" drop />
            <Divider />
            <Action icon={<RefreshIcon />} hot="О" text="бновить" />
            <Action icon={<OpenIcon />} hot="О" text="ткрыть" drop />
            <Action icon={<ClearIcon />} text="Очистить" drop />
            <Action icon={<SummaryIcon />} text="Свод услуг (F10)" />
            <Action icon={<CardIcon />} text="Считать с УЭК" />
          </ActionBar>
          <DaysRow>
            <GreenArrow left />
            <GreenArrow />
            <label htmlFor="days">Кол-во дней:</label>
            <Spinner>
              <TextInput
                id="days"
                value={daysCount}
                onChange={(e) => setDaysCount(e.target.value)}
              />
              <SpinnerButtons>
                <SpinnerButton aria-label="Больше" onClick={() => setDaysCount(+daysCount + 1)}>
                  <UpIcon />
                </SpinnerButton>
                <SpinnerButton aria-label="Меньше" onClick={() => setDaysCount(+daysCount - 1)}>
                  <SmallDown />
                </SpinnerButton>
              </SpinnerButtons>
            </Spinner>
          </DaysRow>
          <ScheduleHead>
            <ScrollButton aria-label="Назад">
              <Chevron d="M6 1L3 4l3 3" />
            </ScrollButton>
            <Corner />
            <HeadColumn>
              <HeadCell>27.05.2024 (Понедельник) Иванова Т.С. (Врач-терапевт участковый)</HeadCell>
              <HeadCell $day>27.05.2024 (Пн)</HeadCell>
            </HeadColumn>
            <ScrollButton aria-label="Вперед">
              <Chevron d="M2 1l3 3-3 3" />
            </ScrollButton>
          </ScheduleHead>
          <ScheduleArea>
            <Schedule>
              <tbody>
                {hours.map((hour, h) =>
                  minutes.map((minute, m) => {
                    const number = h * 4 + m + 1;
                    const selected = number === 2;
                    return (
                      <tr key={number}>
                        {m === 0 && (
                          <Hour rowSpan="4" $current={h === 0}>
                            {hour}
                          </Hour>
                        )}
                        <TimeCell $selected={selected}>
                          <TimeLine>
                            {minute}
                            <TimeTick />
                            <span>{number}</span>
                          </TimeLine>
                        </TimeCell>
                        <Slot $selected={selected} $hourEnd={m === 3} />
                      </tr>
                    );
                  })
                )}
              </tbody>
            </Schedule>
            <ContextMenu>
              <li>
                <ContextItem>
                  <ContextIcon><PersonPlus /></ContextIcon>
                  <span><u>Н</u>овый прием</span>
                  <span>F7</span>
                </ContextItem>
              </li>
              <li>
                <ContextItem $bold>
                  <ContextIcon><PersonPlus /></ContextIcon>
                  <span><u>Н</u>овый прием и печать талона</span>
                  <span>F9</span>
                </ContextItem>
              </li>
              <li>
                <ContextItem $hover>
                  <ContextIcon />
                  <span>Зарезервировать время</span>
                </ContextItem>
              </li>
              <li>
                <ContextItem>
                  <ContextIcon />
                  <span>Вставить зарезервированное</span>
                </ContextItem>
              </li>
              <li>
                <ContextItem>
                  <ContextIcon><FlagIcon /></ContextIcon>
                  <span><u>C</u>ito! прием</span>
                </ContextItem>
              </li>
              <li>
                <ContextItem>
                  <ContextIcon><BlackPrinter /></ContextIcon>
                  <span>C<u>i</u>to! прием и печать</span>
                </ContextItem>
              </li>
              <Marker width="34" height="34" viewBox="0 0 34 34" $top={66} $left={210}>
                <path d="M6 6l26 27" stroke="#d80808" strokeWidth="2" />
                <path d="M0 0l11 3-8 8z" fill="#d80808" />
              </Marker>
            </ContextMenu>
            <StepMarker number="3" tip="M-34 35L4 4l10 20z" top={-2} left={887} />
          </ScheduleArea>
          <Totals>
            <TotalsCorner />
            <TotalsText>
              {"Всего талонов: 8   Занято талонов: 0   Осталось талонов: 8   Сверх расписания: 0"}
            </TotalsText>
          </Totals>
          <HorizontalSplitter>
            <SplitArrow d="M1 2l2.500 2.500L6 2" />
            <SplitterDots />
            <SplitArrow d="M1 2l2.500 2.500L6 2" />
          </HorizontalSplitter>
          <Tabs>
            {extraTabs.map((name, i) => (
              <Tab
                key={name}
                $active={i === extraTab}
                $shaded={i === 3}
                onClick={() => setExtraTab(i)}
              >
                {name}
              </Tab>
            ))}
          </Tabs>
          <ExtraPanel>
            <ExtraTable>
              <thead>
                <tr>
                  <ExtraHead $width={11} />
                  <ExtraHead $width={52}>№</ExtraHead>
                  <ExtraHead>Талоны за пределами расписания (срочные, дополнительные ...)</ExtraHead>
                  <ExtraHead $width={187}>Дата рождения</ExtraHead>
                  <ExtraHead $width={128}>Автор</ExtraHead>
                </tr>
              </thead>
            </ExtraTable>
            <EmptyNote>Нет талонов вне расписания</EmptyNote>
          </ExtraPanel>
        </Content>
      </Workspace>

      <TaskStrip>
        <TaskTab>
          <TaskSlant width="10" height="23" viewBox="0 0 10 23">
            <path d="M0 23L6 .5h4" fill="none" stroke="#a0a0a0" />
          </TaskSlant>
          <PlannerIcon />
          <span>Модуль амбулаторно-поликлинического приема. Планировщик записи на прием.</span>
          <TaskButton aria-label="Закрыть вкладку">
            <svg width="9" height="9" viewBox="0 0 9 9">
              <path
                d="M.5.5h2.500l1.500 2 1.500-2h2.500v2.500l-2 1.500 2 1.500v2.500H6L4.500 6.500 3 8.500H.5V6l2-1.500-2-1.500z"
                fill="none"
                stroke="#77773a"
              />
            </svg>
          </TaskButton>
        </TaskTab>
        <TaskButton $raised aria-label="Список вкладок">
          <svg width="9" height="7" viewBox="0 0 9 7">
            <path
              d="M.5 1.500l1-1 3 2 3-2 1 1v1.500l-4 3.500-4-3.500z"
              fill="none"
              stroke="#77773a"
            />
          </svg>
        </TaskButton>
      </TaskStrip>
    </Window>
  );
};

export default App;
